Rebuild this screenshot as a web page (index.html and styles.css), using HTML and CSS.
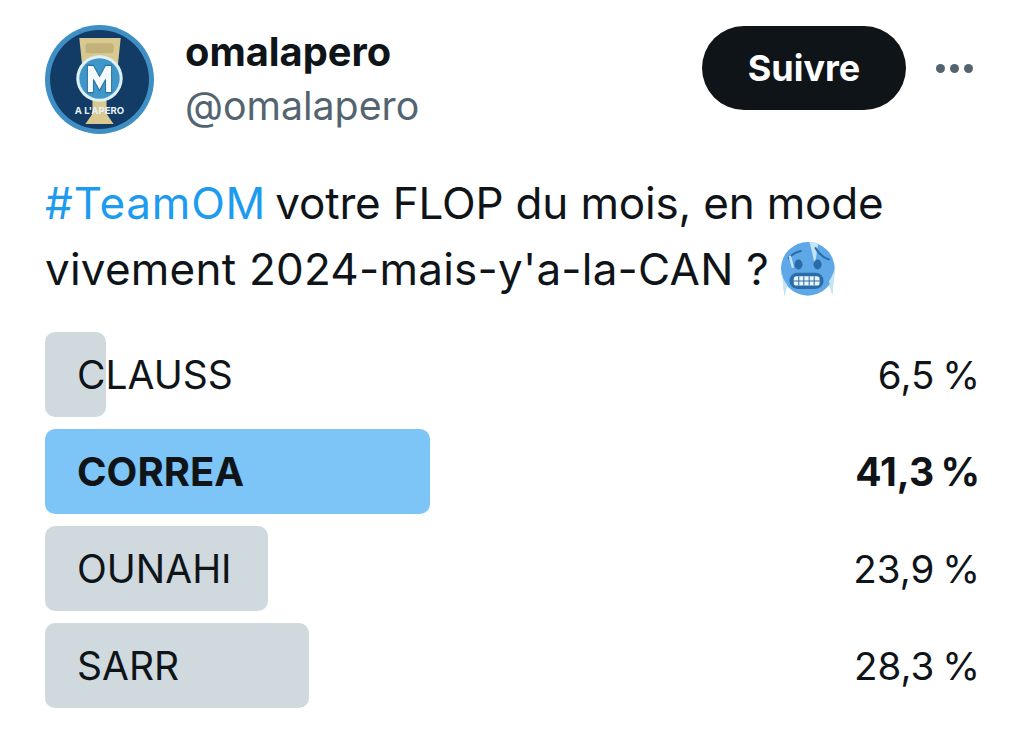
FILE: index.html
```html
<!DOCTYPE html>
<html lang="fr">
<head>
<meta charset="utf-8">
<title>omalapero</title>
<link rel="stylesheet" href="styles.css">
</head>
<body>
<main class="tweet">
  <header class="head">
    <svg class="avatar" viewBox="0 0 108 108" aria-label="omalapero">
      <circle cx="54" cy="54" r="54" fill="#3f8fc4"/>
      <circle cx="54" cy="54" r="49" fill="#123b66"/>
      <path d="M34 13H75L72 42Q69 58 61 66V88L68 98H40L47 88V66Q39 58 37 42Z" fill="#d9c88f"/>
      <rect x="40" y="18" width="28" height="10" rx="3" fill="#c2b279"/>
      <circle cx="54" cy="53" r="23" fill="#dff0f7"/>
      <circle cx="54" cy="53" r="20" fill="#3f96c9"/>
      <path class="logo-m" d="M42 40H48L54 51L60 40H66V67H60V54L54 65L48 54V67H42Z"/>
      <text class="logo-text" x="54" y="88" text-anchor="middle">A L'APERO</text>
    </svg>
    <div class="who">
      <div class="name">omalapero</div>
      <div class="handle">@omalapero</div>
    </div>
    <button class="follow">Suivre</button>
    <div class="more"><i></i><i></i><i></i></div>
  </header>
  <p class="text"><span class="tag">#TeamOM</span><span class="line-one"> votre FLOP du mois, en mode</span><br><span class="line-two">vivement 2024-mais-y'a-la-CAN ? </span><svg class="emoji" viewBox="120 35 170 170" aria-label="visage froid">
      <path d="M125 125L133 200L141 172Z" fill="#c5e4f5"/>
      <path d="M285 108L276 196L264 160Z" fill="#c5e4f5"/>
      <circle cx="203" cy="118" r="80" fill="#5fa8e8"/>
      <path d="M125 125L133 200L141 165Q128 150 125 125Z" fill="#c5e4f5"/>
      <path d="M285 108L276 196L266 155Q280 135 285 108Z" fill="#c5e4f5"/>
      <path d="M208 38L234 40L224 108L216 70Z" fill="#c5e4f5"/>
      <path d="M146 86Q160 70 182 65" class="brow"/>
      <path d="M226 56Q240 82 266 90" class="brow"/>
      <path d="M150 82L158 112" stroke="#c5e4f5" stroke-width="7" stroke-linecap="round"/>
      <ellipse cx="175" cy="105" rx="12" ry="15" fill="#2a6ca8"/>
      <ellipse cx="232" cy="105" rx="12" ry="15" fill="#2a6ca8"/>
      <rect x="148" y="130" width="102" height="48" rx="24" fill="#2a6ca8"/>
      <rect x="161" y="140" width="77" height="28" rx="8" fill="#eaf5fc"/>
      <path d="M176 140V168M191 140V168M207 140V168M222 140V168M161 154H238" stroke="#2a6ca8" stroke-width="3" fill="none"/>
    </svg></p>
  <section class="poll">
    <div class="row"><div class="bar" style="width:6.5%"></div><span class="label">CLAUSS</span><span class="pct">6,5 %</span></div>
    <div class="row win"><div class="bar" style="width:41.3%"></div><span class="label">CORREA</span><span class="pct">41,3 %</span></div>
    <div class="row"><div class="bar" style="width:23.9%"></div><span class="label">OUNAHI</span><span class="pct">23,9 %</span></div>
    <div class="row"><div class="bar" style="width:28.3%"></div><span class="label">SARR</span><span class="pct">28,3 %</span></div>
  </section>
</main>
</body>
</html>
```
FILE: styles.css
```css
html, body { margin: 0; padding: 0; background: #fff; }
body { width: 1024px; height: 738px; overflow: hidden; font-family: Inter, "Liberation Sans", sans-serif; color: #0f1419; }
.tweet { padding: 25px 47px 0 45px; }
.head { display: flex; align-items: flex-start; }
.avatar { width: 109px; height: 109px; flex: none; }
.logo-m { fill: #f5fbfd; stroke: #2b6f9f; stroke-width: 1; }
.logo-text { font: 700 9.500px Inter, sans-serif; fill: #e8f3f8; }
.who { margin-left: 31px; flex: 1; }
.name { font-size: 39.800px; font-weight: 700; line-height: 54px; }
.handle { font-size: 39.300px; line-height: 54px; color: #536471; }
.follow { width: 204px; height: 84px; margin-top: 1px; border: 0; border-radius: 42px; background: #0f1419; color: #fff; font: 700 36px Inter, sans-serif; padding: 0; }
.more { display: flex; gap: 5px; margin: 39px 4px 0 30px; }
.more i { width: 9px; height: 9px; border-radius: 50%; background: #536471; display: block; }
.text { margin: 36px 0 0; font-size: 44px; line-height: 66px; white-space: nowrap; }
.tag { color: #1d9bf0; letter-spacing: 0.800px; }
.line-one { letter-spacing: -0.180px; margin-left: -3px; }
.line-two { letter-spacing: 0.230px; }
.emoji { width: 57px; height: 57px; vertical-align: -13px; margin-left: -2px; }
.brow { fill: none; stroke: #2a6ca8; stroke-width: 6; stroke-linecap: round; }
.poll { margin-top: 30px; display: flex; flex-direction: column; gap: 12px; }
.row { position: relative; height: 85px; display: flex; align-items: center; justify-content: space-between; font-size: 39px; padding-left: 32px; }
.bar { position: absolute; left: 0; top: 0; bottom: 0; background: #cfd9de; border-radius: 10px; }
.label, .pct { position: relative; }
.pct { font-size: 38.500px; word-spacing: -3px; margin-right: -3px; }
.win { font-weight: 700; }
.win .label { font-size: 40px; }
.win .pct { font-size: 39px; }
.win .bar { background: #7dc4f7; }
```
